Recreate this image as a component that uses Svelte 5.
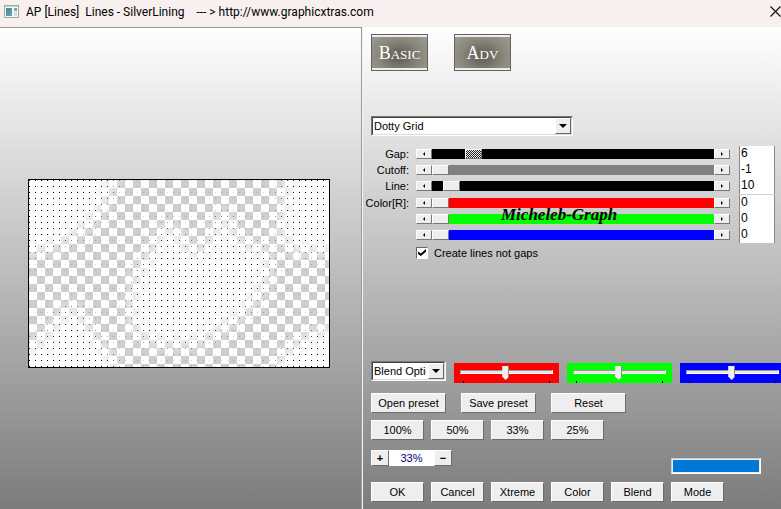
<script>
  let effect = $state('Dotty Grid');
  let blendOption = $state('Blend Options');
  let linesNotGaps = $state(true);
  let zoom = $state('33%');

  // pos is the thumb offset on a 0-265 scale
  const groups = [
    [
      { id: 'gap', label: 'Gap:', color: '#000', pos: 33, value: '6', active: true },
      { id: 'cutoff', label: 'Cutoff:', color: '#808080', pos: 0, value: '-1' },
      { id: 'line', label: 'Line:', color: '#000', pos: 11, value: '10' }
    ],
    [
      { id: 'red', label: 'Color[R]:', color: '#f00', pos: 0, value: '0' },
      { id: 'green', label: '', name: 'Color green', color: '#0f0', pos: 0, value: '0' },
      { id: 'blue', label: '', name: 'Color blue', color: '#00f', pos: 0, value: '0' }
    ]
  ];
  const blends = [
    { name: 'Blend red', color: '#f00' },
    { name: 'Blend green', color: '#0f0' },
    { name: 'Blend blue', color: '#00f' }
  ];
  const presets = ['Open preset', 'Save preset', 'Reset'];
  const zooms = ['100%', '50%', '33%', '25%'];
  const actions = ['OK', 'Cancel', 'Xtreme', 'Color', 'Blend', 'Mode'];
</script>

<div class="window">
  <header>
    <svg class="appicon" width="15" height="13" viewBox="0 0 15 13">
      <defs>
        <linearGradient id="ic" x1="0" y1="0" x2="1" y2="1">
          <stop offset="0" stop-color="#3f8f7a" /><stop offset="1" stop-color="#6f9fbe" />
        </linearGradient>
      </defs>
      <rect x=".5" y=".5" width="14" height="12" fill="#f4f6f6" stroke="#a3a8aa" />
      <rect x="1" y="1" width="13" height="1" fill="#c8d0d4" />
      <rect x="2" y="3" width="6" height="8" fill="url(#ic)" />
      <rect x="10" y="3" width="3" height="3" fill="#7fa8a4" />
      <rect x="10" y="7" width="3" height="4" fill="#d3dfe2" />
    </svg>
    <h1>AP [Lines]&nbsp; Lines - SilverLining&nbsp;&nbsp;&nbsp; --- &gt; http://www.graphicxtras.com</h1>
    <button class="close" aria-label="Close">
      <svg width="11" height="11" viewBox="0 0 11 11"><path d="M.5 .5L10.500 10.500M10.500 .5L.5 10.500" stroke="#111" stroke-width="1.200" /></svg>
    </button>
  </header>

  <div class="body">
    <section class="preview">
      <svg width="302" height="189" viewBox="-1 -1 302 189" role="img" aria-label="Preview">
        <defs>
          <pattern id="checker" width="16" height="16" patternUnits="userSpaceOnUse">
            <rect width="16" height="16" fill="#fff" />
            <rect x="8" width="8" height="8" fill="#c6c6c6" />
            <rect y="8" width="8" height="8" fill="#c6c6c6" />
          </pattern>
          <pattern id="dots" width="6" height="6" patternUnits="userSpaceOnUse">
            <rect width="1" height="1" fill="#000" />
          </pattern>
          <filter id="soft" x="-20%" y="-20%" width="140%" height="140%" color-interpolation-filters="sRGB"><feGaussianBlur stdDeviation="8" /></filter>
          <mask id="cloud" maskUnits="userSpaceOnUse" x="0" y="0" width="300" height="187">
            <rect width="300" height="187" fill="#262626" />
            <g fill="#fff" filter="url(#soft)">
              <path d="M-20-20H92L80 18 64 42 38 60 12 72-20 74Z" />
              <path d="M108 88L124 70 130 50 142 40 152 58 164 76 182 62 186 44 194 26 204 44 212 66 230 64 244 76 238 102 218 132 192 150 166 164 126 164 106 152 100 130Z" />
              <path d="M258-20L254 18 250 48 258 70 320 76V-20Z" />
              <path d="M-20 210V168L14 160 28 138 44 122 56 138 66 158 86 178 90 210Z" />
              <path d="M240 210L252 174 276 156 320 142V210Z" />
            </g>
          </mask>
        </defs>
        <rect x="-.5" y="-.5" width="301" height="188" fill="url(#checker)" stroke="#000" />
        <g mask="url(#cloud)">
          <rect width="300" height="187" fill="#fff" fill-opacity=".9" />
          <rect width="300" height="187" fill="url(#dots)" shape-rendering="crispEdges" />
        </g>
      </svg>
    </section>

    <section class="controls">
      <div class="modes">
        <button class="plate">Basic</button>
        <button class="plate">Adv</button>
      </div>

      <div class="combo effect">
        <select bind:value={effect} aria-label="Effect"><option>Dotty Grid</option></select>
        <span class="drop"></span>
      </div>

      <div class="sliders">
        {#each groups as group}
          <div class="group">
            {#each group as s}
              <div class="row">
                <label for={s.id}>{s.label}</label>
                <div class="scroll">
                  <button class="step" aria-label="Decrease"><span class="tri left"></span></button>
                  <input id={s.id} class:active={s.active} type="range" min="0" max="265" value={s.pos} aria-label={s.name} style:background={s.color} />
                  <button class="step" aria-label="Increase"><span class="tri right"></span></button>
                </div>
                <input class="value" type="text" value={s.value} aria-label={`${s.name ?? s.label} value`} />
              </div>
            {/each}
          </div>
        {/each}
        <span class="signature">Micheleb-Graph</span>
      </div>

      <label class="check">
        <input type="checkbox" bind:checked={linesNotGaps} />
        Create lines not gaps
      </label>

      <div class="blends">
        <div class="combo blend">
          <select bind:value={blendOption} aria-label="Blend options"><option>Blend Options</option></select>
          <span class="drop"></span>
        </div>
        {#each blends as b}
          <div class="trackbar" style:background-color={b.color}>
            <input type="range" min="0" max="100" value="49" aria-label={b.name} />
          </div>
        {/each}
      </div>

      <div class="buttons wide">
        {#each presets as p}<button>{p}</button>{/each}
      </div>
      <div class="buttons">
        {#each zooms as z}<button>{z}</button>{/each}
      </div>
      <div class="status">
        <div class="zoom">
          <button aria-label="Zoom in">+</button>
          <input type="text" bind:value={zoom} aria-label="Zoom" />
          <button aria-label="Zoom out">−</button>
        </div>
        <progress value="1" max="1" aria-label="Render progress"></progress>
      </div>
      <div class="buttons last">
        {#each actions as a}<button>{a}</button>{/each}
      </div>
    </section>
  </div>
</div>

<style>
  .window {
    display: flex;
    flex-direction: column;
    min-height: 100vh;
    overflow: hidden;
    font: 11px/16px "Liberation Sans", Arial, sans-serif;
    color: #000;
  }
  .window * { box-sizing: border-box; }
  button, input, select { font: inherit; color: inherit; margin: 0; padding: 0; border-radius: 0; }

  header {
    display: flex;
    align-items: center;
    height: 27px;
    padding: 0 0 4px 4px;
    background: #f8f0ef;
  }
  .appicon { flex: none; }
  h1 {
    flex: 1;
    margin: 0 0 0 7px;
    font: 12px/20px Roboto, "Noto Sans", sans-serif;
    white-space: nowrap;
  }
  .close { display: flex; border: 0; background: none; }

  .body {
    flex: 1;
    display: flex;
    background: linear-gradient(#fff, #7c7c7c);
  }
  .preview {
    flex: 0 0 362px;
    display: flex;
    align-items: center;
    justify-content: center;
    padding: 10px 4px 0 0;
    border-top: 1px solid #9a9a9a;
    border-right: 1px solid #9a9a9a;
  }
  .preview svg { display: block; }

  .controls {
    flex: 1;
    min-width: 0;
    padding: 7px 0 7px 8px;
    border-left: 1px solid #f4f4f4;
  }
  .modes { display: flex; gap: 26px; }
  .plate {
    width: 57px;
    height: 37px;
    border: 1px solid #626262;
    background: radial-gradient(ellipse at 50% 60%, #67655c 15%, #8a877d 55%, #a19e93);
    box-shadow: inset 0 2px #eee, inset 0 -2px #eee;
    color: #fff;
    font: small-caps 18px/20px "Liberation Serif", serif;
  }

  .combo {
    position: relative;
    height: 20px;
    border: 1px solid;
    border-color: #777 #fff #fff #777;
    background: #fff;
  }
  .combo select {
    width: 100%;
    height: 18px;
    padding: 0 18px 0 1px;
    border: 1px solid;
    border-color: #444 #ddd #ddd #444;
    background: #fff;
    appearance: none;
    overflow: hidden;
  }
  .effect { width: 202px; margin-top: 45px; }
  .blend { flex: none; width: 75px; }
  .drop {
    position: absolute;
    top: 1px;
    right: 1px;
    width: 16px;
    height: 16px;
    border: 1px solid;
    border-color: #fff #666 #666 #fff;
    background: #eee;
    pointer-events: none;
  }
  .drop::after {
    content: "";
    position: absolute;
    left: 3px;
    top: 5px;
    border: 4px solid transparent;
    border-top-color: #000;
    border-bottom: 0;
  }

  .sliders {
    position: relative;
    display: flex;
    flex-direction: column;
    gap: 1px;
    margin: 10px 6px 0 0;
  }
  .row { display: flex; align-items: center; height: 16px; }
  .row label { width: 38px; margin-right: 7px; display: flex; justify-content: flex-end; white-space: nowrap; }
  .scroll { flex: 1; display: flex; height: 10px; min-width: 0; }
  .step {
    display: flex;
    align-items: center;
    justify-content: center;
    width: 16px;
    height: 10px;
    border: 1px solid;
    border-color: #fff #777 #777 #fff;
    background: #eee;
  }
  .tri { border: 2px solid transparent; }
  .left { border-right: 2px solid #000; border-left: 0; }
  .right { border-left: 2px solid #000; border-right: 0; }
  .scroll input { flex: 1; min-width: 0; height: 10px; appearance: none; }
  .scroll input::-webkit-slider-thumb {
    appearance: none;
    width: 17px;
    height: 10px;
    border: 1px solid;
    border-color: #fff #777 #777 #fff;
    background: #eee;
  }
  .scroll input.active::-webkit-slider-thumb {
    background: repeating-conic-gradient(#222 0 25%, #eee 0 50%) 0 0 / 2px 2px;
  }
  .value {
    width: 36px;
    height: 16px;
    margin-left: 9px;
    padding: 0 1px 2px;
    border: 1px solid #888;
    border-width: 0 1px;
    background: #fff;
    font-size: 12px;
  }
  .signature {
    position: absolute;
    left: 130px;
    top: 59px;
    font: italic bold 17px/20px "Monotype Corsiva", "Liberation Serif", serif;
    pointer-events: none;
  }

  .check { display: flex; align-items: center; gap: 6px; width: max-content; margin: 2px 0 0 45px; }
  .check input {
    width: 12px;
    height: 12px;
    border: 1px solid;
    border-color: #666 #fff #fff #666;
    background: #fff;
    appearance: none;
  }
  .check input:checked::before {
    content: "";
    display: block;
    width: 8px;
    height: 7px;
    margin: 1px;
    background: #000;
    clip-path: polygon(0 35%, 35% 65%, 100% 0, 100% 40%, 35% 100%, 0 70%);
  }

  .blends { display: flex; align-items: flex-start; gap: 8px; margin-top: 100px; }
  .trackbar {
    flex: none;
    width: 105px;
    height: 20px;
    margin-top: 2px;
    padding: 2px 6px;
    background-image: linear-gradient(#000, #000), linear-gradient(#000, #000);
    background-size: 1px 2px;
    background-position: 9px 18px, 95px 18px;
    background-repeat: no-repeat;
  }
  .trackbar input { display: block; width: 93px; height: 14px; background: none; appearance: none; }
  .trackbar input::-webkit-slider-runnable-track {
    height: 4px;
    border: 1px solid;
    border-color: #999 #fff #fff #999;
    background: #e8e8e8;
  }
  .trackbar input::-webkit-slider-thumb {
    appearance: none;
    width: 7px;
    height: 14px;
    margin-top: -5px;
    border-right: 1px solid #888;
    background: #eee;
    clip-path: polygon(0 0, 100% 0, 100% 75%, 50% 100%, 0 75%);
  }

  .buttons { display: flex; gap: 7px; margin-top: 7px; }
  .buttons button, .zoom button {
    border: 1px solid;
    border-color: #fff #6c6c6c #6c6c6c #fff;
    background: #eee;
  }
  .buttons button { width: 53px; height: 20px; white-space: nowrap; }
  .wide { gap: 15px; margin-top: 10px; }
  .wide button { width: 75px; }
  .status { display: flex; align-items: flex-end; height: 24px; margin-top: 10px; }
  .zoom { display: flex; align-self: flex-start; margin-right: 219px; }
  .zoom button { width: 18px; height: 16px; font-weight: bold; line-height: 13px; }
  .zoom input { width: 45px; height: 16px; border: 0; background: #fff; color: #000080; text-align: center; }
  progress {
    width: 90px;
    height: 16px;
    padding: 1px;
    border: 1px solid;
    border-color: #ccc #fff #fff #ccc;
    background: #eee;
    appearance: none;
  }
  progress::-webkit-progress-bar { background: #eee; }
  progress::-webkit-progress-value { background: #0078d7; }
  .last { margin-top: 8px; }
</style>
